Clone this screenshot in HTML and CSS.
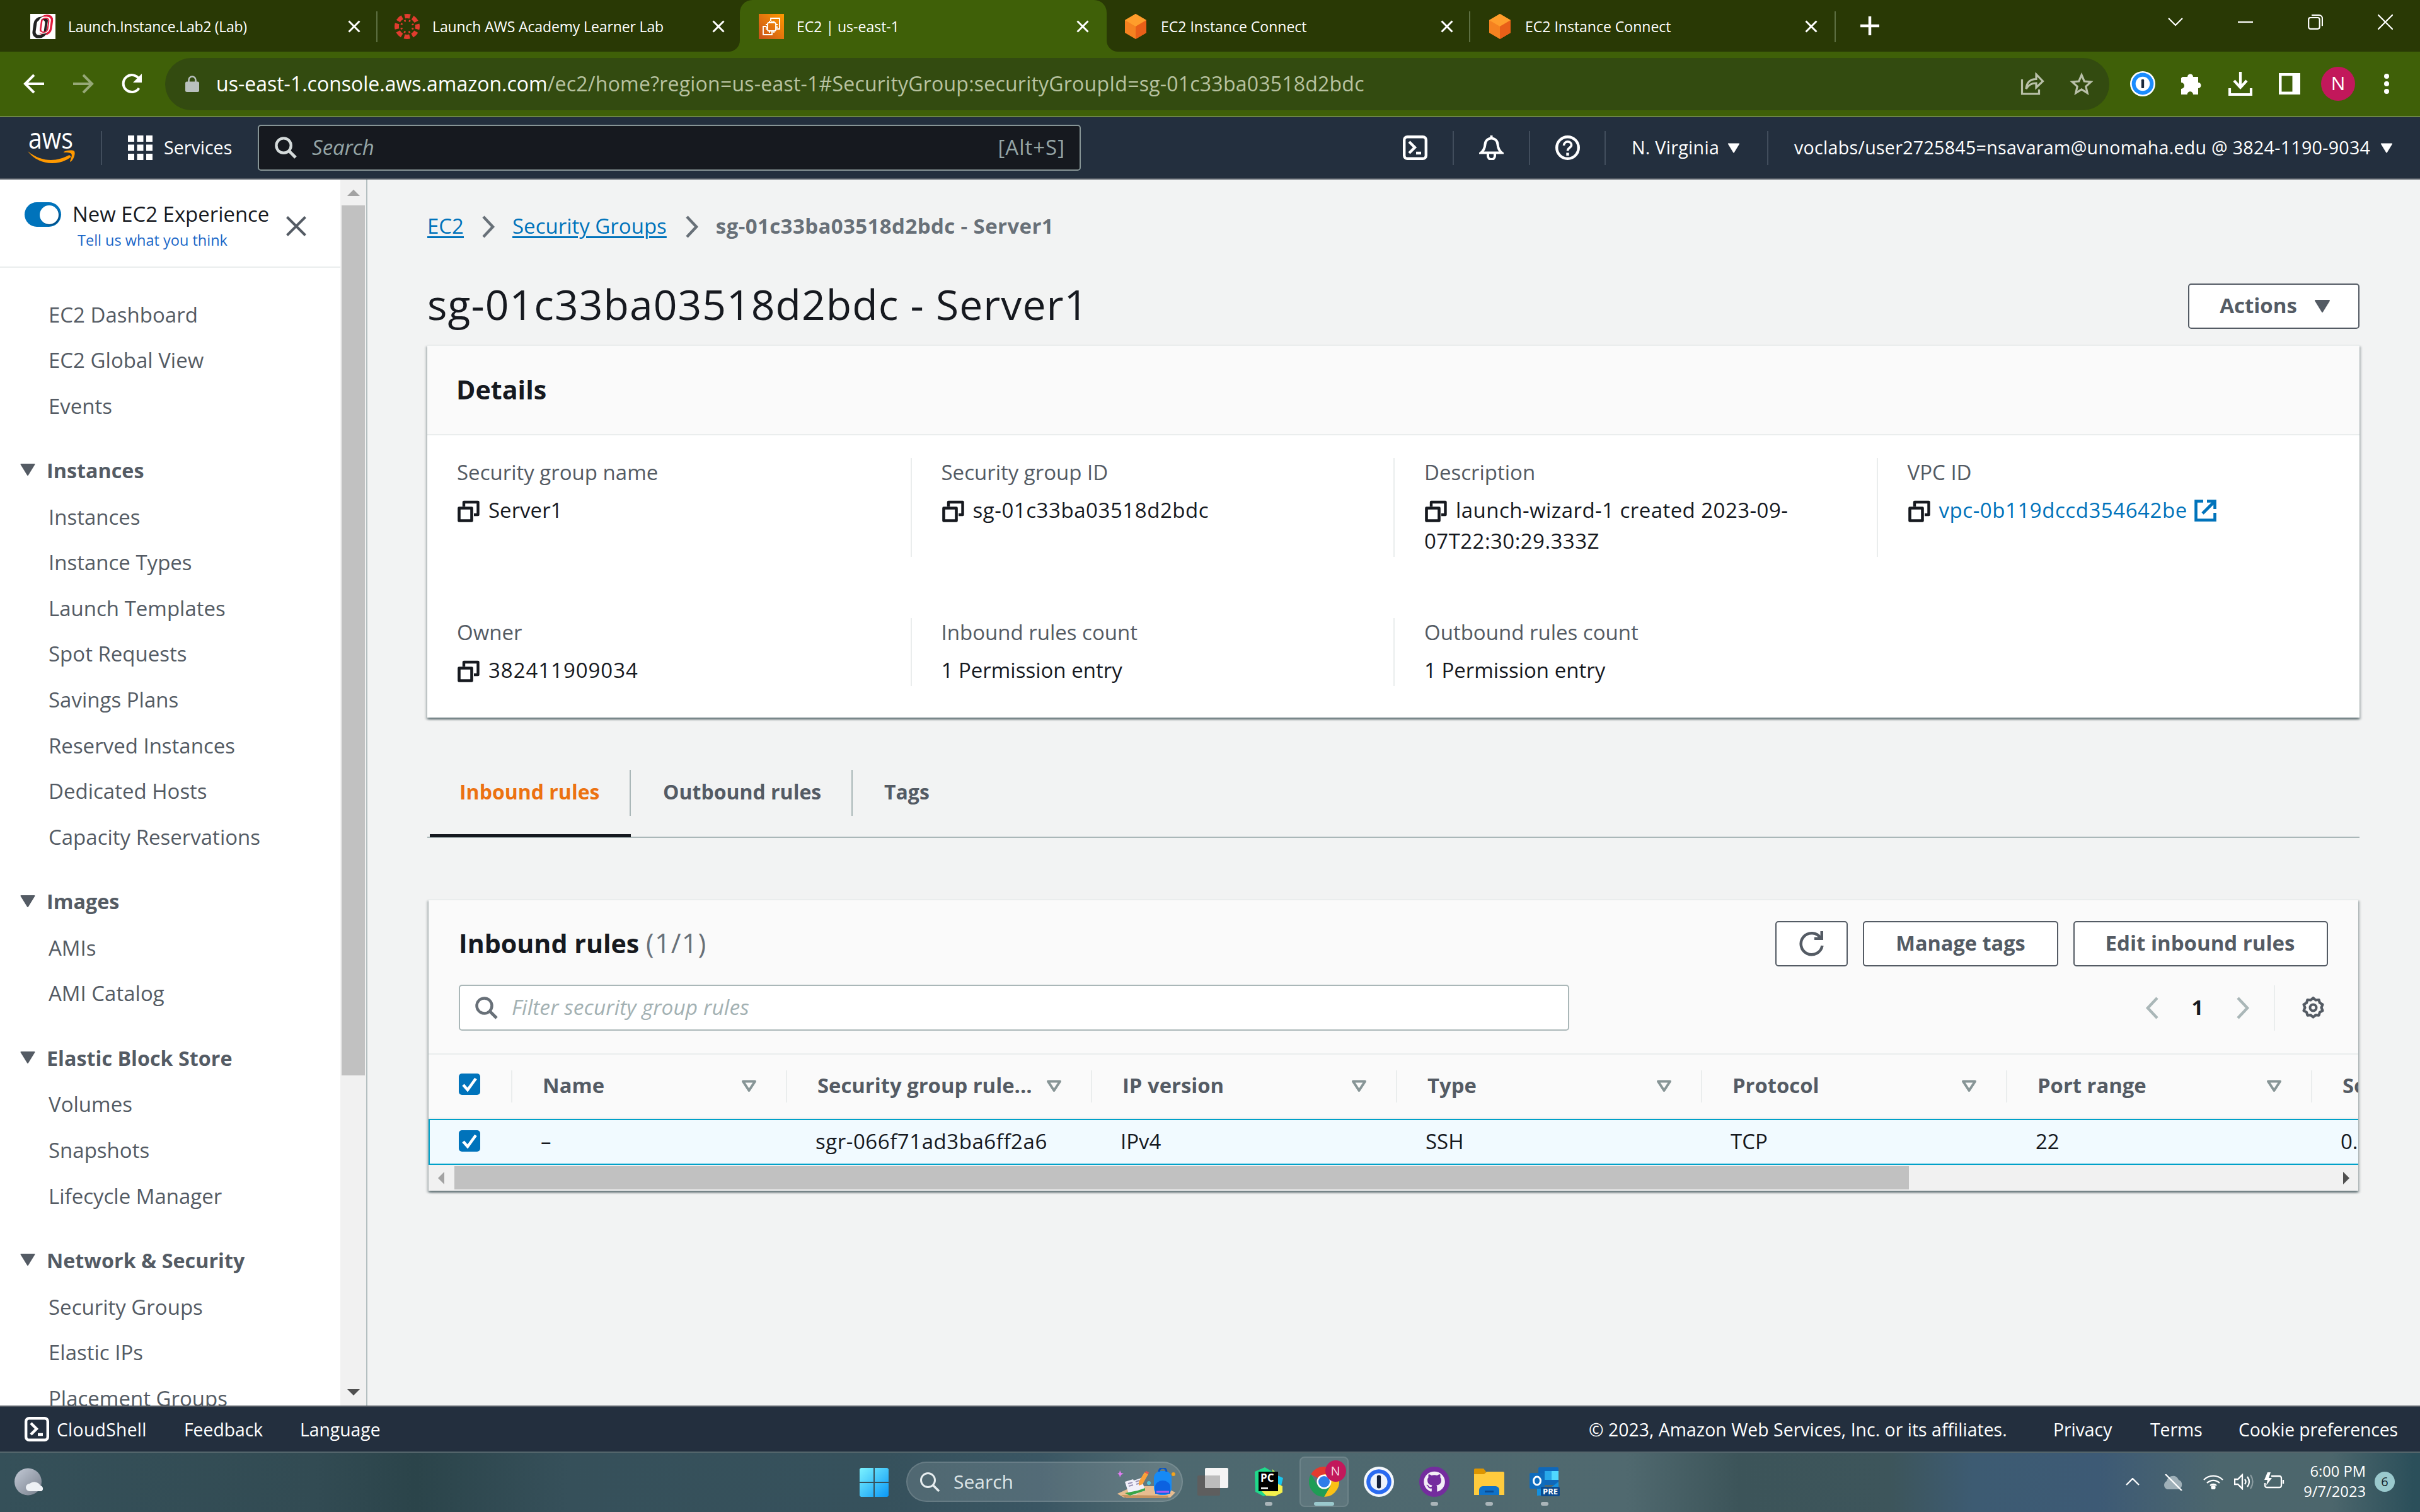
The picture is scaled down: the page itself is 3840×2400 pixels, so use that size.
FILE: index.html
```html
<!DOCTYPE html>
<html lang="en">
<head>
<meta charset="utf-8">
<title>EC2 | us-east-1</title>
<link rel="stylesheet" href="styles.css">
</head>
<body>
<svg class="sprite" width="0" height="0">
  <symbol id="x" viewBox="0 0 20 20"><path d="M1.5 1.5l17 17M18.500 1.500l-17 17" fill="none" stroke="currentColor" stroke-width="3"/></symbol>
  <symbol id="caret" viewBox="0 0 25 19"><path d="M2 1h21L12.500 18z" fill="currentColor" stroke="currentColor" stroke-width="2" stroke-linejoin="round"/></symbol>
  <symbol id="sort" viewBox="0 0 25 20"><path d="M3 2.500h19L12.500 17z" fill="none" stroke="currentColor" stroke-width="4" stroke-linejoin="round"/></symbol>
  <symbol id="copy" viewBox="0 0 35 35"><path d="M2.500 12.500h20v20h-20z" fill="#fff" stroke="currentColor" stroke-width="4.600" stroke-linejoin="round"/><path d="M10 10V3h22.500v20H26" fill="none" stroke="currentColor" stroke-width="4.400" stroke-linejoin="round"/></symbol>
  <symbol id="chev" viewBox="0 0 22 36"><path d="M3 2l15 16L3 34" fill="none" stroke="currentColor" stroke-width="4.500"/></symbol>
  <symbol id="search" viewBox="0 0 36 36"><circle cx="14.500" cy="14.500" r="12" fill="none" stroke="currentColor" stroke-width="4.500"/><path d="M23 23l11 11" stroke="currentColor" stroke-width="5"/></symbol>
  <symbol id="shell" viewBox="0 0 39 39"><rect x="2.200" y="2.200" width="34.600" height="34.600" rx="5" fill="none" stroke="currentColor" stroke-width="4.400"/><path d="M10 10l9 9-9 9M21 28h8" fill="none" stroke="currentColor" stroke-width="4.400"/></symbol>
  <symbol id="cube" viewBox="0 0 40 40"><path d="M20 0l17 10v20L20 40 3 30V10z" fill="#f58220"/><path d="M20 0l17 10-17 10L3 10z" fill="#ff9d2b"/><path d="M37 10v20L20 40V20z" fill="#e95f18"/></symbol>
  <symbol id="onepw" viewBox="0 0 46 46"><circle cx="23" cy="23" r="23" fill="#f4f7fb"/><circle cx="23" cy="23" r="19" fill="#2a6af0"/><circle cx="23" cy="23" r="13" fill="#eef3fb"/><rect x="20" y="13" width="6" height="20" rx="2.500" fill="#14213c"/></symbol>
</svg>

<header class="tabstrip">
  <div class="tab"><svg class="fav" viewBox="0 0 40 40"><path fill="#fff" d="M0 0h40v40H0z"/><g fill="none" transform="skewX(-8) translate(3 0)"><rect x="15" y="3" width="18" height="29" rx="8" stroke="#e01a3c" stroke-width="3.500"/><rect x="7" y="7" width="18" height="29" rx="8" stroke="#222" stroke-width="5"/><rect x="14" y="6" width="14" height="24" rx="5" stroke="#fff" stroke-width="3"/><rect x="17" y="7" width="11" height="22" rx="5" stroke="#e01a3c" stroke-width="2"/></g></svg><span class="tt long">Launch.Instance.Lab2 (Lab)</span><svg class="tx"><use href="#x"/></svg></div>
  <div class="tab sep"><svg class="fav" viewBox="0 0 40 40"><g fill="none" stroke="#e13c2f"><circle cx="20" cy="20" r="16.500" stroke-width="7" stroke-dasharray="8.800 4.160" stroke-dashoffset="4.400"/><circle cx="20" cy="20" r="9.500" stroke-width="3" stroke-dasharray="2.500 4.960" stroke-dashoffset="-2.500"/></g></svg><span class="tt mid">Launch AWS Academy Learner Lab</span><svg class="tx"><use href="#x"/></svg></div>
  <div class="tab active"><svg class="flare l" viewBox="0 0 18 18"><path d="M18 0v18H0A18 18 0 0 0 18 0z"/></svg><svg class="fav" viewBox="0 0 40 40"><defs><linearGradient id="og" x1="0" y1="1" x2="1" y2="0"><stop offset="0" stop-color="#c8511b"/><stop offset="1" stop-color="#ff9900"/></linearGradient></defs><path fill="url(#og)" d="M0 0h40v40H0z"/><g fill="none" stroke="#fff" stroke-width="1.800"><path d="M19 12V7h14v17h-5M12 20H7v13h14v-5"/><rect x="14" y="14" width="13" height="13" rx="2"/><path d="M17 11v3M21 11v3M24 11v3M17 27v3M21 27v3M24 27v3M11 17h3M11 21h3M11 24h3M27 17h3M27 21h3"/></g></svg><span class="tt">EC2 | us-east-1</span><svg class="tx"><use href="#x"/></svg><svg class="flare r" viewBox="0 0 18 18"><path d="M0 0v18h18A18 18 0 0 1 0 0z"/></svg></div>
  <div class="tab"><svg class="fav"><use href="#cube"/></svg><span class="tt">EC2 Instance Connect</span><svg class="tx"><use href="#x"/></svg></div>
  <div class="tab sep"><svg class="fav"><use href="#cube"/></svg><span class="tt">EC2 Instance Connect</span><svg class="tx"><use href="#x"/></svg></div>
  <div class="newtab"><svg width="30" height="30" viewBox="0 0 30 30"><path d="M15 0v30M0 15h30" stroke="#fff" stroke-width="4.500"/></svg></div>
  <div class="winctl">
    <svg viewBox="0 0 24 24"><path d="M1 6l11 11L23 6"/></svg>
    <svg viewBox="0 0 24 24"><path d="M0 12h24"/></svg>
    <svg viewBox="0 0 24 24"><rect x="1.200" y="5" width="17.500" height="17.800" rx="3"/><path d="M6 1.200h12a5 5 0 0 1 5 5v12"/></svg>
    <svg viewBox="0 0 24 24"><path d="M0 0l24 24M24 0L0 24"/></svg>
  </div>
</header>

<div class="toolbar">
  <svg class="nav1" viewBox="0 0 34 32"><path d="M33 16H3M17 2L3 16l14 14"/></svg>
  <svg class="nav2" viewBox="0 0 34 32"><path d="M1 16h30M17 2l14 14-14 14"/></svg>
  <svg class="nav3" viewBox="0 0 34 32"><path d="M28.500 23A13.500 13.500 0 1 1 29 9"/><path d="M33 0v14H19z" class="solid"/></svg>
  <div class="omni">
    <svg class="lock" viewBox="0 0 22 26"><path d="M5.500 12V7a5.500 5.500 0 0 1 11 0v5" fill="none" stroke="#b9c0be" stroke-width="2.600"/><rect y="9.500" width="22" height="16.500" rx="2.500" fill="#b9c0be"/></svg>
    <span class="url"><b>us-east-1.console.aws.amazon.com</b><i>/ec2/home?region=us-east-1#SecurityGroup:securityGroupId=sg-01c33ba03518d2bdc</i></span>
    <svg class="share" viewBox="0 0 36 36"><path d="M1.500 11v23h27v-7M8 26c1-11 7-15.500 16-15.500V3l10.500 11L24 24v-7c-8 0-12 3-16 9z"/></svg>
    <svg class="star" viewBox="0 0 36 36"><path d="M18 4l4.300 10 10.500 1-8 7.200 2.400 10.500L18 27l-9.200 5.700 2.400-10.500-8-7.200 10.500-1z"/></svg>
  </div>
  <svg class="e1" viewBox="0 0 46 46"><circle cx="23" cy="23" r="23" fill="#fff"/><circle cx="23" cy="23" r="20" fill="#1a8cff"/><circle cx="23" cy="23" r="13" fill="#fff"/><rect x="20.500" y="15" width="5" height="16" rx="1.500" fill="#1b2a3c"/></svg>
  <svg class="e2" viewBox="0 0 34 34"><path fill="#fff" d="M2 6h8a4.500 4.500 0 0 1 9 0h8v9a4.500 4.500 0 0 1 0 9v10h-8a4.700 4.700 0 0 0-9.400 0H0v-9a5 5 0 0 0 0-10V8z"/></svg>
  <svg class="e3" viewBox="0 0 38 38"><path d="M19 0v24M9 14l10 11 10-11M2 26v10h34V26" fill="none" stroke="#fff" stroke-width="4.200"/></svg>
  <svg class="e4" viewBox="0 0 34 34"><path fill="#fff" fill-rule="evenodd" d="M0 0h34v34H0zM4.500 4.500v25h17v-25z"/></svg>
  <span class="avatar">N</span>
  <svg class="e5" viewBox="0 0 8 32"><g fill="#fff"><circle cx="4" cy="4" r="4"/><circle cx="4" cy="16" r="4"/><circle cx="4" cy="28" r="4"/></g></svg>
</div>

<nav class="awsnav">
  <svg class="aws" viewBox="0 0 76 62"><text x="1" y="25" textLength="71" lengthAdjust="spacingAndGlyphs">aws</text><g transform="translate(0 -8)" fill="#f90"><path d="M0 37c22 18 46 17 66 6l3 3C50 61 17 60 0 37z"/><path d="M57 38c7-3 14-3 17-1 2 4-1 13-6 17l-1-1c2-5 4-10 2-12s-7-2-12-2z"/></g></svg>
  <span class="dv d0"></span>
  <svg class="apps" viewBox="0 0 39 39"><path fill="#fff" d="M0 0h10v10H0zM14.500 0h10v10h-10zM29 0h10v10H29zM0 14.500h10v10H0zM14.500 14.500h10v10h-10zM29 14.500h10v10H29zM0 29h10v10H0zM14.500 29h10v10h-10zM29 29h10v10H29z"/></svg>
  <span class="svc">Services</span>
  <div class="awssearch"><svg><use href="#search"/></svg><em>Search</em><span>[Alt+S]</span></div>
  <svg class="n1"><use href="#shell"/></svg><span class="dv"></span>
  <svg class="n2" viewBox="0 0 39 39"><g fill="none" stroke="#fff" stroke-width="4"><path d="M19.500 0v5M3 27.500h33c-5-4-6-8-6.500-13a10 10 0 0 0-20 0C9 19.500 8 23.500 3 27.500z"/><path d="M14 28.500v4a5.500 5.500 0 0 0 11 0v-4"/></g></svg><span class="dv"></span>
  <svg class="n3" viewBox="0 0 39 39"><circle cx="19.500" cy="19.500" r="17.300" fill="none" stroke="#fff" stroke-width="4.400"/><path d="M13.500 16c0-8 12-8 12-1 0 5-6 4-6 9.500" fill="none" stroke="#fff" stroke-width="3.600"/><path d="M17.300 27.500h4.400V32h-4.400z" fill="#fff"/></svg><span class="dv"></span>
  <span class="region">N. Virginia</span><svg class="nc"><use href="#caret"/></svg><span class="dv d4"></span>
  <span class="acct">voclabs/user2725845=nsavaram@unomaha.edu @ 3824-1190-9034</span><svg class="nc"><use href="#caret"/></svg>
</nav>

<div class="middle">
  <aside class="side">
    <div class="sidehead">
      <span class="toggle"><i></i></span>
      <div class="exp"><p>New EC2 Experience</p><a>Tell us what you think</a></div>
      <svg class="sx" viewBox="0 0 32 32"><path d="M1.500 1.500l29 29M30.500 1.500l-29 29" stroke="#545b64" stroke-width="4"/></svg>
    </div>
    <div class="menu">
      <a>EC2 Dashboard</a><a>EC2 Global View</a><a>Events</a>
      <h3><svg><use href="#caret"/></svg>Instances</h3>
      <a>Instances</a><a>Instance Types</a><a>Launch Templates</a><a>Spot Requests</a><a>Savings Plans</a><a>Reserved Instances</a><a>Dedicated Hosts</a><a>Capacity Reservations</a>
      <h3><svg><use href="#caret"/></svg>Images</h3>
      <a>AMIs</a><a>AMI Catalog</a>
      <h3><svg><use href="#caret"/></svg>Elastic Block Store</h3>
      <a>Volumes</a><a>Snapshots</a><a>Lifecycle Manager</a>
      <h3><svg><use href="#caret"/></svg>Network &amp; Security</h3>
      <a>Security Groups</a><a>Elastic IPs</a><a>Placement Groups</a>
    </div>
  </aside>
  <div class="vscroll"><svg class="up" viewBox="0 0 20 10"><path d="M0 10L10 0l10 10z" fill="#a3a3a3"/></svg><div class="vthumb"></div><svg class="down" viewBox="0 0 20 10"><path d="M0 0l10 10L20 0z" fill="#505050"/></svg></div>

  <main>
    <div class="crumbs"><a>EC2</a><svg><use href="#chev"/></svg><a>Security Groups</a><svg><use href="#chev"/></svg><b>sg-01c33ba03518d2bdc - Server1</b></div>
    <div class="titlerow"><h1>sg-01c33ba03518d2bdc - Server1</h1><div class="btn actions">Actions<svg><use href="#caret"/></svg></div></div>

    <section class="card details">
      <h2>Details</h2>
      <div class="kv">
        <div><label>Security group name</label><p><svg><use href="#copy"/></svg>Server1</p></div>
        <div><label>Security group ID</label><p class="id"><svg><use href="#copy"/></svg>sg-01c33ba03518d2bdc</p></div>
        <div><label>Description</label><p class="desc"><svg><use href="#copy"/></svg>launch-wizard-1 created 2023-09-<br>07T22:30:29.333Z</p></div>
        <div><label>VPC ID</label><p class="id"><svg><use href="#copy"/></svg><a>vpc-0b119dccd354642be</a><svg class="ext" viewBox="0 0 35 35"><path d="M14 2.500H2.500v30h30V21M20 2.500h12.500V15M32 3L13 22" fill="none" stroke="#0073bb" stroke-width="4.600"/></svg></p></div>
        <div><label>Owner</label><p class="num"><svg><use href="#copy"/></svg>382411909034</p></div>
        <div><label>Inbound rules count</label><p>1 Permission entry</p></div>
        <div><label>Outbound rules count</label><p>1 Permission entry</p></div>
      </div>
    </section>

    <div class="tabs"><div class="t on"><span>Inbound rules</span></div><div class="t t2"><span>Outbound rules</span></div><div class="t t3"><span>Tags</span></div></div>

    <section class="card rules">
      <div class="rhead"><h2>Inbound rules <span>(1/1)</span></h2>
        <div class="btn refresh"><svg width="40" height="40" viewBox="0 0 40 40"><path d="M36.500 23A17 17 0 1 1 34 11" fill="none" stroke="#545b64" stroke-width="4.500"/><path d="M38 0v14H24v-4.500h9.500V0z" fill="#545b64"/></svg></div>
        <div class="btn manage">Manage tags</div><div class="btn edit">Edit inbound rules</div></div>
      <div class="rfilter"><div class="fbox"><svg><use href="#search"/></svg><em>Filter security group rules</em></div>
        <svg class="pl"><use href="#chev"/></svg><b>1</b><svg class="pr"><use href="#chev"/></svg><span class="pd"></span>
        <svg class="gear" viewBox="0 0 39 39"><path d="M19.500 3l4 3.500 5-.5 1.500 4.800 4.500 2.700-2 4.700 2 5-4.500 2.600-1.500 4.900-5-.5-4 3.300-4-3.300-5 .5L9 25.800l-4.500-2.600 2-5-2-4.700L9 10.800 10.500 6l5 .5z" transform="translate(0 1)" fill="none" stroke="#545b64" stroke-width="4.200" stroke-linejoin="round"/><circle cx="19.500" cy="19.500" r="5" fill="none" stroke="#545b64" stroke-width="4"/></svg></div>
      <div class="grid gh">
        <div class="ck"><svg viewBox="0 0 34 34"><path d="M7 18l7 8L27 8"/></svg></div>
        <div class="hc"><span>Name</span><svg><use href="#sort"/></svg></div><div class="hc"><span>Security group rule...</span><svg><use href="#sort"/></svg></div><div class="hc"><span>IP version</span><svg><use href="#sort"/></svg></div><div class="hc"><span>Type</span><svg><use href="#sort"/></svg></div><div class="hc"><span>Protocol</span><svg><use href="#sort"/></svg></div><div class="hc"><span>Port range</span><svg><use href="#sort"/></svg></div><div class="hc"><span>Source</span></div>
      </div>
      <div class="grid gr">
        <div class="ck"><svg viewBox="0 0 34 34"><path d="M7 18l7 8L27 8"/></svg></div>
        <div>–</div><div class="id">sgr-066f71ad3ba6ff2a6</div><div>IPv4</div><div>SSH</div><div>TCP</div><div>22</div><div>0.0.0.0/0</div>
      </div>
      <div class="hscroll"><svg viewBox="0 0 10 20"><path d="M10 0v20L0 10z" fill="#a3a3a3"/></svg><div class="hthumb"></div><svg class="ra" viewBox="0 0 10 20"><path d="M0 0v20l10-10z" fill="#505050"/></svg></div>
    </section>
  </main>
</div>

<footer class="foot"><svg><use href="#shell"/></svg><span class="f1">CloudShell</span><span class="f2">Feedback</span><span class="f3">Language</span><span class="f4">© 2023, Amazon Web Services, Inc. or its affiliates.</span><span class="f5">Privacy</span><span class="f6">Terms</span><span class="f7">Cookie preferences</span></footer>

<div class="taskbar">
  <svg class="weather" viewBox="0 0 46 44"><defs><linearGradient id="wg" x1="0" y1="0" x2="1" y2="1"><stop offset="0" stop-color="#c3cad6"/><stop offset="1" stop-color="#777f8c"/></linearGradient></defs><circle cx="21.500" cy="22" r="21.500" fill="url(#wg)"/><path d="M24 37a6 6 0 0 1 0-12 11 11 0 0 1 17 3 5 5 0 0 1 2 9z" fill="#eef1f5"/></svg>
  <svg class="start" viewBox="0 0 46 46"><defs><linearGradient id="sg" x1="0" y1="0" x2="1" y2="1"><stop offset="0" stop-color="#7cf3ff"/><stop offset="1" stop-color="#0a97f5"/></linearGradient></defs><path fill="url(#sg)" d="M2 0h20v22H0V2zM24 0h20l2 2v20H24zM0 24h22v22H2l-2-2zM24 24h22v20l-2 2H24z"/></svg>
  <div class="tsearch"><svg class="ts" viewBox="0 0 31 31"><circle cx="12.500" cy="12.500" r="11" fill="none" stroke="#e6edef" stroke-width="3"/><path d="M20 20l10 10" stroke="#e6edef" stroke-width="3.500"/></svg><span>Search</span>
    <svg class="ill" viewBox="0 0 92 48"><path d="M0 41l26-12h46l20 10-8 8H10z" fill="#e8bd90"/><path d="M6 43l76 1-4 4H14z" fill="#c6935f"/><path d="M12 22l13-4 1 2 12-4 6 20-12 4-1 2-12 2z" fill="#f2f0fa"/><path d="M12 40l20-4 12-4v4L20 44z" fill="#3aa548"/><path d="M17 25l7-2M18 29l7-2M29 22l6-2M30 26l6-2" stroke="#9a93b5" stroke-width="2"/><path d="M34 22l9-15 6 3-9 16-6 2z" fill="#f9a13a"/><path d="M43 7l3-2 4 2-1 3z" fill="#e8584e"/><rect x="58" y="5" width="28" height="38" rx="11" fill="#168af5"/><path d="M66 6a6 6 0 0 1 12 0" fill="none" stroke="#0a55c4" stroke-width="3"/><path d="M60 30a12 10 0 0 1 24 0v11H60z" fill="#0c62e0"/><path d="M62 38h20" stroke="#b05cf0" stroke-width="3"/><path d="M4 4l2 4 4 1-4 2-2 4-1-4-3-2 3-1z" fill="#e07cf2"/><circle cx="50" cy="24" r="3" fill="#4fc3d8"/><circle cx="89" cy="10" r="3" fill="#f2a31c"/></svg></div>
  <svg class="tview" viewBox="0 0 49 44"><rect y="12" width="36" height="32" rx="2" fill="#5e5e5e"/><rect x="12" width="37" height="32" rx="2" fill="#f4f4f4"/><path d="M12 12h24v20H14l-2-2z" fill="#bdbdbd"/></svg>
  <div class="app"><svg viewBox="0 0 48 48"><path d="M2 8l16-7 12 7 4 8-8 26-10 5L3 40z" fill="#1fd98b"/><path d="M30 8l8 6 9 4-3 12-10 4z" fill="#18c5ee"/><path d="M12 38l24-12 10 5v10l-12 6-14-1z" fill="#f3f04c"/><path d="M30 4l8 8-8 4z" fill="#b6ee50"/><path d="M8 8h31v31H8z" fill="#000"/><text x="11" y="24" class="pc">PC</text><path d="M12 33h11v2.500H12z" fill="#fff"/></svg><i></i></div>
  <div class="app cur"><svg viewBox="0 0 48 48"><path d="M3.200 12A24 24 0 0 1 44.800 12L24 24z" fill="#e33b2e"/><path d="M44.800 12A24 24 0 0 1 24 48l10-18-10-18z" fill="#fbc116"/><path d="M3.200 12A24 24 0 0 0 24 48l10.400-18H14z" fill="#1f9d55"/><circle cx="24" cy="24" r="11.500" fill="#fff"/><circle cx="24" cy="24" r="9" fill="#2f7de9"/></svg><span class="nb">N</span><i></i></div>
  <div class="app o"><svg><use href="#onepw"/></svg></div>
  <div class="app g"><svg viewBox="0 0 46 46"><circle cx="23" cy="23" r="23" fill="#742c9e"/><path d="M23 7.500c-9 0-16 7-16 15.500 0 7 4.500 13 11 15 .8 0 1-.4 1-1v-4c-4.500 1-5.500-2-5.500-2-.8-2-2-2.500-2-2.500-1.400-1 .2-1 .2-1 1.600.1 2.500 1.700 2.500 1.700 1.500 2.400 3.800 1.700 4.800 1.300.1-1 .5-1.700 1-2.100-3.600-.4-7.500-1.800-7.500-8 0-1.700.6-3.200 1.700-4.300-.2-.4-.8-2.100.1-4.300 0 0 1.400-.4 4.500 1.600a15 15 0 0 1 8.400 0c3.100-2 4.500-1.600 4.500-1.600.9 2.200.3 3.900.1 4.300 1 1.100 1.700 2.600 1.700 4.300 0 6.200-3.900 7.600-7.500 8 .6.500 1.100 1.500 1.100 3V37c0 .6.300 1 1 1 6.400-2 11-8 11-15 0-8.500-7-15.500-16.100-15.500z" fill="#f3eef6"/></svg><i></i></div>
  <div class="app"><svg viewBox="0 0 48 48"><path d="M0 5a2 2 0 0 1 2-2h13l4 5-3 6H0z" fill="#dd9500"/><path d="M0 12h16l4-4h26a2 2 0 0 1 2 2v35H0z" fill="#ffcb3d"/><path d="M8 45V37a6 6 0 0 1 6-6h20a6 6 0 0 1 6 6v8z" fill="#0f72c9"/><path d="M17 38h14v3H17z" fill="#0a4a91"/></svg><i></i></div>
  <div class="app"><svg viewBox="0 0 48 48"><path d="M14 3a2 2 0 0 1 2-2h28a2 2 0 0 1 2 2v26H14z" fill="#0f68ba"/><path d="M24 7h11v14H24z" fill="#28a8ea"/><path d="M35 7h11v14H35z" fill="#50d9ff"/><path d="M12 46V22l18 14 16-12v20z" fill="#1490df"/><rect y="10" width="24" height="25" rx="2" fill="#0f6cbd"/><ellipse cx="12" cy="22.500" rx="5.500" ry="6.500" fill="none" stroke="#fff" stroke-width="3"/><rect x="18" y="32" width="30" height="15" rx="2" fill="#0b4a8f"/><text x="21" y="44" class="pre">PRE</text></svg><i></i></div>
  <svg class="tr1" viewBox="0 0 22 12"><path d="M1 11L11 1l10 10"/></svg>
  <svg class="tr2" viewBox="0 0 32 26"><path d="M7 24a7 7 0 0 1-1-13C8 2 21-1 25 9a8 8 0 0 1 0 15z" fill="#9fb0b8" stroke="none"/><path d="M4 0l26 26"/></svg>
  <svg class="tr3" viewBox="0 0 32 24"><path d="M1 9a21 21 0 0 1 30 0M6 14a14 14 0 0 1 20 0M11 18a7 7 0 0 1 10 0"/><circle cx="16" cy="21" r="2.500" fill="#fff"/></svg>
  <svg class="tr4" viewBox="0 0 31 26"><path d="M1 9h5l7-7v22l-7-7H1zM17 9q3 4 0 8M21 5q6 8 0 16"/><path d="M26 2q7 11 0 22" opacity=".35"/></svg>
  <svg class="tr5" viewBox="0 0 33 26"><path d="M12 6h13a3 3 0 0 1 3 3v12a3 3 0 0 1-3 3H5a3 3 0 0 1-3-3v-4M31 12v6"/><path d="M6 0L1 12h5l-2 9 9-12H8l3-9z" fill="#fff" stroke="none"/></svg>
  <div class="clock">6:00 PM<br>9/7/2023</div><span class="cnt">6</span>
</div>
</body>
</html>
```
FILE: styles.css
```css
* { box-sizing: border-box; margin: 0; padding: 0; }
html, body { width: 3840px; height: 2400px; overflow: hidden; }
body { display: flex; flex-direction: column; font-family: "Open Sans", "Noto Sans", sans-serif; font-size: 33px; color: #16191f; background: #f2f3f3; white-space: nowrap; }
svg { display: block; flex: none; }
.sprite { position: absolute; }

/* browser tabs */
.tabstrip { display: flex; flex: none; height: 82px; background: #293905; padding-left: 20px; color: #fff; }
.tab { position: relative; display: flex; align-items: center; width: 578px; height: 82px; padding: 2px 0 0 28px; }
.tab.sep::before { content: ""; position: absolute; left: -1px; top: 18px; width: 2px; height: 49px; background: #5d6f42; }
.tab.active { background: #3f6008; border-radius: 20px 20px 0 0; width: 582px; margin: 0 -2px; padding-left: 30px; }
.flare { position: absolute; bottom: 0; width: 18px; height: 18px; fill: #3f6008; }
.flare.l { left: -18px; } .flare.r { right: -18px; }
.fav { width: 40px; height: 40px; }
.tt { flex: 1; margin-left: 20px; font-size: 23px; }
.tt.long { letter-spacing: -.28px; } .tt.mid { letter-spacing: -.13px; }
.tx { width: 20px; height: 20px; margin-right: 26px; }
.active .tx { margin-right: 28px; }
.newtab { position: relative; width: 100px; padding: 26px 0 0 42px; }
.newtab::before { content: ""; position: absolute; left: 1px; top: 18px; width: 2px; height: 49px; background: #5d6f42; }
.winctl { display: flex; gap: 87px; margin: 23px 43px 0 auto; }
.winctl svg { width: 24px; height: 24px; fill: none; stroke: #fff; stroke-width: 2.2; }

/* address bar */
.toolbar { display: flex; align-items: center; flex: none; height: 104px; background: #3f6008; border-bottom: 2px solid #6c8645; color: #fff; }
.nav1, .nav2, .nav3 { width: 34px; height: 32px; fill: none; stroke: #fff; stroke-width: 4; }
.nav1 { margin-left: 37px; } .nav2 { margin-left: 44px; opacity: .45; } .nav3 { margin: 0 36px 0 43px; }
.nav3 .solid { fill: #fff; stroke: none; }
.omni { display: flex; align-items: center; width: 3085px; height: 83px; border-radius: 42px; background: #334b10; padding-left: 32px; }
.lock { width: 22px; height: 26px; }
.url { flex: 1; margin-left: 27px; font-size: 32px; padding-bottom: 1px; }
.url b { font-weight: 400; } .url i { font-style: normal; color: #b8c2a0; letter-spacing: .22px; }
.share, .star { width: 38px; height: 36px; fill: none; stroke: #b9c0a9; stroke-width: 3.2; }
.share { margin-right: 40px; } .star { margin-right: 25px; }
.e1 { width: 40px; height: 40px; margin-left: 33px; }
.e2 { width: 34px; height: 34px; margin-left: 41px; }
.e3 { width: 38px; height: 38px; margin-left: 41px; }
.e4 { width: 34px; height: 34px; margin-left: 42px; }
.avatar { width: 54px; height: 54px; margin-left: 33px; border-radius: 50%; background: #c2185b; font-size: 30px; line-height: 52px; text-align: center; }
.e5 { width: 8px; height: 32px; margin-left: 46px; }

/* console header */
.awsnav { display: flex; align-items: center; flex: none; height: 99px; background: #232f3e; border-bottom: 2px solid #545b64; color: #fff; font-size: 28.6px; }
.aws { width: 76px; height: 62px; margin-left: 44px; margin-top: 14px; }
.aws text { font: 500 46px "Open Sans", sans-serif; fill: #fff; }
.dv { width: 2px; height: 54px; background: #414d5c; }
.d0 { margin-left: 40px; }
.apps { width: 39px; height: 39px; margin-left: 41px; }
.svc { width: 149px; margin-left: 18px; padding-bottom: 2px; }
.awssearch { display: flex; align-items: center; width: 1306px; height: 73px; border: 2.5px solid #879596; border-radius: 5px; background: #16191f; font-size: 33px; color: #95a5a6; padding: 0 23px 0 25px; margin-right: 511px; }
.awssearch svg { width: 35px; height: 35px; color: #d5dbdb; }
.awssearch em { flex: 1; margin-left: 24px; padding-bottom: 3px; }
.awssearch span { letter-spacing: 1px; padding-bottom: 3px; }
.n1, .n2, .n3 { width: 39px; height: 39px; margin-right: 40px; }
.n2 { margin-left: 40px; } .n3 { margin-left: 40px; margin-right: 39px; }
.region { width: 152px; margin-left: 41px; padding-bottom: 2px; letter-spacing: .3px; }
.nc { width: 20px; height: 16px; }
.d4 { margin-left: 43px; }
.acct { width: 930px; margin-left: 41px; padding-bottom: 2px; letter-spacing: .28px; }

/* sidebar */
.middle { display: flex; flex: none; height: 1946px; overflow: hidden; }
.side { flex: none; width: 540px; background: #fff; overflow: hidden; color: #545b64; }
.sidehead { display: flex; height: 140px; border-bottom: 2px solid #eaeded; color: #16191f; }
.toggle { width: 58px; height: 39px; margin: 36px 0 0 39px; border-radius: 20px; background: #0073bb; padding: 5px 0 0 24px; }
.toggle i { display: block; width: 30px; height: 30px; border-radius: 50%; background: #fff; box-shadow: 2px 2px 1px #00508a; }
.exp { width: 339px; margin: 30px 0 0 18px; }
.exp p { line-height: 50px; font-size: 32.9px; }
.exp a { display: block; margin-left: 8px; font-size: 23.5px; line-height: 30px; color: #1966c8; padding-top: 1px; }
.sx { width: 32px; height: 32px; margin-top: 58px; }
.menu { padding-top: 38.500px; }
.menu a { display: block; height: 72.600px; line-height: 72.600px; padding-left: 77px; }
.menu h3 { display: flex; align-items: center; height: 103.400px; padding: 26px 0 0 31px; font-size: 32.300px; }
.menu h3 svg { width: 26px; height: 19px; margin: 0 17px 0 0; }
.vscroll { flex: none; display: flex; flex-direction: column; align-items: center; width: 43px; background: #f1f1f1; border-right: 2px solid #b4bfc0; }
.up, .down { width: 20px; height: 10px; }
.up { margin: 16px 0 15px; } .down { margin: 0 0 16px; }
.vthumb { width: 37px; height: 1381px; background: #c1c1c1; margin-bottom: auto; }

/* page */
main { flex: 1; min-width: 0; padding: 43px 96px 0 95px; }
.crumbs { display: flex; align-items: center; height: 60px; color: #687078; }
.crumbs a { color: #0073bb; text-decoration: underline; text-decoration-thickness: 2.5px; text-underline-offset: 4px; }
.crumbs a:first-child { width: 57px; }
.crumbs svg { width: 22px; height: 36px; margin: 4px 27px 0 29px; }
.crumbs b { font-size: 33px; letter-spacing: .4px; }
.titlerow { display: flex; align-items: center; height: 72px; margin-top: 62px; }
h1 { flex: 1; font-size: 66px; font-weight: 400; letter-spacing: 1.05px; padding-bottom: 9px; line-height: 80px; margin-top: 0; }
.btn { display: flex; align-items: center; justify-content: center; height: 72px; border: 2.5px solid #545b64; border-radius: 5px; background: #fff; color: #545b64; font-weight: 700; font-size: 33px; padding-bottom: 3px; }
.actions { width: 272px; padding-left: 4px; }
.actions svg { width: 26px; height: 20px; margin: 2px 0 0 27px; }
.card { background: #fff; border-top: 2px solid #eaeded; box-shadow: 0 3px 3px rgba(0,28,36,.42), 3px 3px 3px rgba(0,28,36,.15), -3px 3px 3px rgba(0,28,36,.15); }
.card h2 { font-size: 41.200px; font-weight: 700; }
.details { margin-top: 25px; height: 592px; }
.details h2 { height: 142px; padding-left: 46px; line-height: 138px; background: #fafafa; border-bottom: 2px solid #eaeded; }
.kv { display: grid; grid-template-columns: repeat(4, 1fr); grid-template-rows: 157px 108px; row-gap: 97px; padding-top: 36px; }
.kv > div { border-left: 2px solid #eaeded; padding-left: 47px; }
.kv > div:nth-child(4n+1) { border-left: 0; }
.kv label { display: block; line-height: 46px; margin-bottom: 12px; color: #545b64; }
.kv p { line-height: 49px; }
.kv p svg { display: inline-block; width: 35px; height: 35px; margin: 0 14px 0 1px; vertical-align: -7px; color: #16191f; }
.kv p .ext { margin: 0 0 0 11px; vertical-align: -6px; }
.kv a { color: #0073bb; }
.id { letter-spacing: .55px; } .num { letter-spacing: .95px; } .desc { letter-spacing: .45px; }

.tabs { display: flex; height: 108px; margin-top: 83px; padding-left: 4px; border-bottom: 2px solid #aab7b8; font-weight: 700; font-size: 32px; color: #545b64; }
.t { height: 107px; } .t span { display: block; height: 73px; line-height: 69px; border-right: 2px solid #aab7b8; padding-left: 47px; }
.on { width: 319px; color: #ec7211; border-bottom: 5px solid #16191f; }
.t2 { width: 352px; } .t2 span { padding-left: 51px; } .t3 span { border: 0; padding-left: 50px; }

.rules { margin: 97px 2px 0; height: 463px; background: #fafafa; overflow: hidden; clip-path: inset(0 -8px -8px -8px); }
.rules > * { overflow: hidden; }
.rhead { display: flex; height: 72px; margin-top: 33px; padding: 0 48px; }
.rhead h2 { flex: 1; line-height: 69px; }
.rhead h2 span { font-weight: 400; font-size: 43px; letter-spacing: 1.2px; color: #687078; }
.refresh { width: 115px; padding: 0; } .manage { width: 310px; margin: 0 24px; font-size: 32.500px; } .edit { width: 404px; padding-right: 2px; }
.rfilter { display: flex; align-items: center; height: 73px; margin-top: 29px; padding-left: 48px; }
.fbox { display: flex; align-items: center; width: 1762px; height: 73px; border: 2.5px solid #aab7b8; border-radius: 5px; background: #fff; padding-left: 24px; color: #687078; margin-right: 914px; }
.fbox svg { width: 36px; height: 36px; }
.fbox em { margin-left: 22px; color: #a3b1b3; padding-bottom: 3px; font-size: 33.500px; letter-spacing: .1px; }
.pl, .pr { width: 22px; height: 36px; color: #aab7b8; } .pl { transform: scaleX(-1); }
.rfilter b { width: 122px; text-align: center; padding-bottom: 3px; }
.pd { width: 2px; height: 72px; background: #eaeded; margin: 0 41px 0 38px; }
.gear { width: 39px; height: 39px; }
.grid { display: grid; grid-template-columns: 131px 436px repeat(6, 484px); align-items: center; }
.gh { height: 104px; margin-top: 36px; border-top: 2px solid #eaeded; border-bottom: 2px solid #eaeded; }
.ck { width: 34px; height: 34px; margin-left: 48px; background: #0073bb; border-radius: 5px; }
.gh .ck { margin-top: -6px; }
.ck path { fill: none; stroke: #fff; stroke-width: 4.500; }
.hc { display: flex; align-items: center; height: 51px; border-left: 2px solid #eaeded; padding: 0 46px; font-weight: 700; font-size: 32.800px; color: #545b64; }
.hc span { flex: 1; padding: 0 0 3px 2px; }
.hc svg { width: 25px; height: 20px; color: #879596; }
.gr { height: 73px; border: 2.5px solid #00a1c9; background: #f1faff; border-right: 0; line-height: 68px; }
.gr .ck { margin: -4px 0 0 46px; }
.gr > div:not(.ck) { padding-left: 45px; margin-top: -1px; }
.hscroll { display: flex; align-items: center; height: 41px; background: #f1f1f1; }
.hscroll svg { width: 10px; height: 20px; margin: 0 16px 0 15px; }
.hthumb { width: 2308px; height: 37px; background: #c1c1c1; margin-right: auto; }
.hscroll .ra { margin: 0 14px; }

/* footer */
.foot { display: flex; align-items: center; flex: none; height: 73px; border-top: 2px solid #545b64; background: #232f3e; color: #fff; font-size: 28.300px; }
.foot svg { width: 39px; height: 39px; margin-left: 39px; }
.f1 { width: 202px; margin-left: 12px; letter-spacing: .3px; } .f2 { width: 184px; } .f3 { width: 2045px; }
.f4 { width: 737px; letter-spacing: .07px; } .f5 { width: 154px; } .f6 { width: 140px; } .f7 { letter-spacing: -.12px; }

/* system taskbar */
.taskbar { display: flex; flex: none; height: 96px; border-top: 2px solid #55666c; padding-top: 24px; color: #fff;
  background: linear-gradient(90deg, #355059 0, #324b53 500px, #2b444a 660px, #36505a 900px, #36515c 1400px, #3a5663 1650px, #4d686f 1840px, #50696f 2580px, #3c5459 2760px, #3d555b 3000px, #3d5b72 3130px, #3d5a75 3330px, #4c666d 3520px, #4c666c 3700px, #2b4f5a 3830px); }
.weather { width: 46px; height: 44px; margin-left: 23px; }
.start { width: 46px; height: 46px; margin-left: 1295px; }
.tsearch { display: flex; align-items: center; width: 439px; height: 64px; margin: -10px 0 0 28px; border: 2px solid rgba(255,255,255,.13); border-radius: 32px; background: rgba(255,255,255,.13); padding-left: 20px; color: #dde5e7; }
.ts { width: 31px; height: 31px; }
.tsearch span { width: 282px; padding: 0 0 2px 22px; font-size: 30px; }
.ill { width: 92px; height: 48px; margin-top: 4px; }
.tview { width: 49px; height: 44px; margin-left: 23px; }
.app { position: relative; width: 78px; height: 80px; margin: -18px 0 0 9.600px; padding: 16px 0 0 15px; }
.app svg { width: 48px; height: 48px; }
.tview + .app { margin-left: 25px; }
.app i { position: absolute; left: 33px; bottom: 2px; width: 12px; height: 6px; border-radius: 3px; background: #aab5b9; }
.cur { background: rgba(255,255,255,.09); border: 2px solid rgba(255,255,255,.1); border-radius: 8px; padding: 14px 0 0 13px; }
.cur i { left: 21px; bottom: 0; width: 32px; background: #9ac9cd; }
.nb { position: absolute; left: 39px; top: 4px; width: 33px; height: 34px; border-radius: 50%; background: #c2185b; font-size: 20px; line-height: 33px; text-align: center; color: #f3dbe5; }
.pc { font: 700 17px "Open Sans", sans-serif; fill: #fff; }
.pre { font: 700 13px "Open Sans", sans-serif; fill: #fff; }
.taskbar > svg[class^="tr"] { fill: none; stroke: #fff; stroke-width: 2.300; }
.taskbar > .tr1 { width: 22px; height: 12px; margin: 16px 0 0 883px; }
.taskbar > .tr2 { width: 32px; height: 26px; margin: 10px 0 0 37px; }
.taskbar > .tr3 { width: 32px; height: 24px; margin: 10px 0 0 32px; }
.taskbar > .tr4 { width: 31px; height: 26px; margin: 9px 0 0 17px; }
.taskbar > .tr5 { width: 33px; height: 26px; margin: 7px 0 0 16px; }
.clock { width: 129px; margin-top: -11px; font-size: 23.700px; line-height: 32px; text-align: right; }
.cnt { width: 32px; height: 32px; margin: 6px 0 0 14px; border-radius: 50%; background: #9ac9cd; color: #17262b; font-size: 20px; line-height: 31px; text-align: center; }
```
